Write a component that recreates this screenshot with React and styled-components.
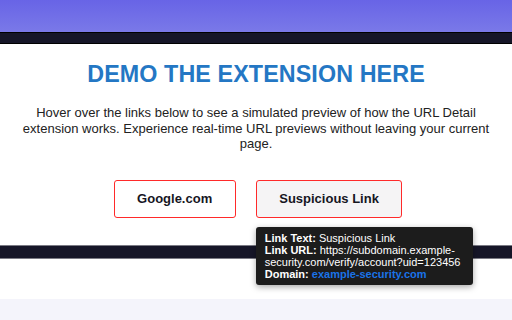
import React from 'react';
import styled, { createGlobalStyle } from 'styled-components';

const Global = createGlobalStyle`
  html, body { margin: 0; padding: 0; background: #fff; }
  body { font-family: "Liberation Sans", Arial, sans-serif; }
`;

const Page = styled.div`
  width: 512px;
  height: 320px;
  overflow: hidden;
  display: flex;
  flex-direction: column;
  & > * { flex-shrink: 0; }
`;

const Hero = styled.div`
  height: 32px;
  background: linear-gradient(180deg, #6864e6 0%, #7a79e8 100%);
`;

const Band = styled.div`
  height: ${(p) => p.h}px;
  background: #161628;
  border-top: 1px solid ${(p) => p.line};
  border-bottom: 1px solid ${(p) => p.line};
  box-sizing: border-box;
`;

const Demo = styled.section`
  height: 201px;
  display: flex;
  flex-direction: column;
  align-items: center;
  padding-top: 17px;
  box-sizing: border-box;
`;

const Title = styled.h2`
  margin: 0;
  font-size: 23.3px;
  font-weight: 700;
  color: #2477c4;
  letter-spacing: 0.1px;
`;

const Lead = styled.p`
  margin: 17px 0 0;
  width: 470px;
  text-align: center;
  font-size: 13px;
  line-height: 15.5px;
  color: #222;
`;

const Buttons = styled.div`
  display: flex;
  gap: 20px;
  margin: 28px 0 0 4px;
`;

const Anchor = styled.span`
  position: relative;
`;

const LinkButton = styled.a`
  display: block;
  height: 38px;
  box-sizing: border-box;
  padding: 0 22.5px;
  line-height: 36px;
  border: 1px solid #ff2a2a;
  border-radius: 3px;
  background: ${(p) => (p.hover ? '#f5f4f5' : '#fff')};
  font-size: 13px;
  font-weight: 700;
  color: #16161f;
  text-decoration: none;
`;

const Tooltip = styled.div`
  position: absolute;
  top: 47px;
  left: 0;
  width: 217px;
  box-sizing: border-box;
  padding: 5px 9px;
  background: #1c1c1c;
  border-radius: 3px;
  box-shadow: 0 2px 6px rgba(0, 0, 0, 0.35);
  color: #fff;
  font-size: 11px;
  line-height: 12px;
  z-index: 2;
  b { font-weight: 700; }
`;

const Domain = styled.span`
  color: #1a73e8;
  font-weight: 700;
`;

const Spacer = styled.div`
  height: ${(p) => p.h}px;
  background: ${(p) => p.bg};
`;

export default function App() {
  return (
    <Page>
      <Global />
      <Hero />
      <Band h={12} line="#000" />
      <Demo>
        <Title>DEMO THE EXTENSION HERE</Title>
        <Lead>
          Hover over the links below to see a simulated preview of how the URL Detail
          extension works. Experience real-time URL previews without leaving your current
          page.
        </Lead>
        <Buttons>
          <LinkButton href="#">Google.com</LinkButton>
          <Anchor>
            <LinkButton href="#" hover>Suspicious Link</LinkButton>
            <Tooltip>
              <div><b>Link Text:</b> Suspicious Link</div>
              <div><b>Link URL:</b> https://subdomain.example-security.com/verify/account?uid=123456</div>
              <div><b>Domain:</b> <Domain>example-security.com</Domain></div>
            </Tooltip>
          </Anchor>
        </Buttons>
      </Demo>
      <Band h={14} line="#7a7a84" />
      <Spacer h={40} bg="#fff" />
      <Spacer h={40} bg="#f4f4fb" />
    </Page>
  );
}
